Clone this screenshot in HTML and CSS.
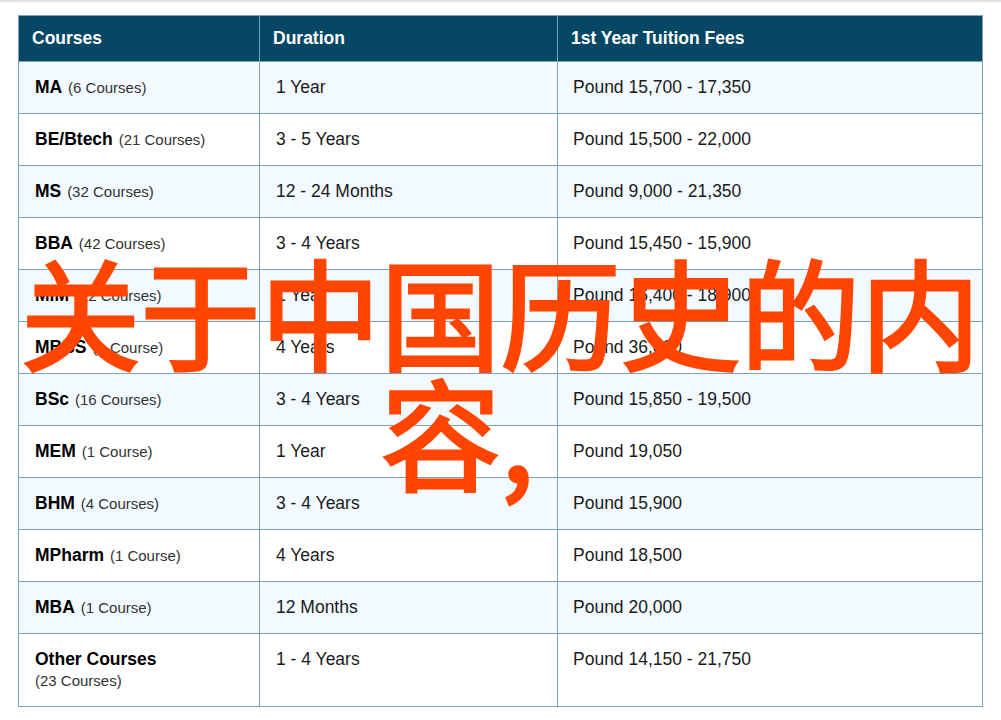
FILE: index.html
```html
<!DOCTYPE html>
<html lang="zh">
<head>
<meta charset="utf-8">
<title>Courses</title>
<link rel="stylesheet" href="styles.css">
</head>
<body>
<div class="topline"></div>
<main class="wrap">
<table class="fees">
<thead>
<tr><th>Courses</th><th>Duration</th><th>1st Year Tuition Fees</th></tr>
</thead>
<tbody>
<tr><td><b>MA</b> <small>(6 Courses)</small></td><td>1 Year</td><td>Pound 15,700 - 17,350</td></tr>
<tr><td><b>BE/Btech</b> <small>(21 Courses)</small></td><td>3 - 5 Years</td><td>Pound 15,500 - 22,000</td></tr>
<tr><td><b>MS</b> <small>(32 Courses)</small></td><td>12 - 24 Months</td><td>Pound 9,000 - 21,350</td></tr>
<tr><td><b>BBA</b> <small>(42 Courses)</small></td><td>3 - 4 Years</td><td>Pound 15,450 - 15,900</td></tr>
<tr><td><b>MIM</b> <small>(12 Courses)</small></td><td>1 Year</td><td>Pound 16,400 - 18,900</td></tr>
<tr><td><b>MBBS</b> <small>(1 Course)</small></td><td>4 Years</td><td>Pound 36,000</td></tr>
<tr><td><b>BSc</b> <small>(16 Courses)</small></td><td>3 - 4 Years</td><td>Pound 15,850 - 19,500</td></tr>
<tr><td><b>MEM</b> <small>(1 Course)</small></td><td>1 Year</td><td>Pound 19,050</td></tr>
<tr><td><b>BHM</b> <small>(4 Courses)</small></td><td>3 - 4 Years</td><td>Pound 15,900</td></tr>
<tr><td><b>MPharm</b> <small>(1 Course)</small></td><td>4 Years</td><td>Pound 18,500</td></tr>
<tr><td><b>MBA</b> <small>(1 Course)</small></td><td>12 Months</td><td>Pound 20,000</td></tr>
<tr class="last"><td><b>Other Courses</b><br><small>(23 Courses)</small></td><td>1 - 4 Years</td><td>Pound 14,150 - 21,750</td></tr>
</tbody>
</table>
</main>
<h1 class="headline"><span class="line">关于中国历史的内</span><span class="line line-two">容,</span></h1>
</body>
</html>
```
FILE: styles.css
```css
html, body { margin: 0; padding: 0; background: #fff; }
body { position: relative; height: 720px; overflow: hidden; font-family: "Liberation Sans", Arial, sans-serif; }
.topline { height: 3px; background: linear-gradient(#dcdcdc, #fafafa); }
.wrap { padding: 12px 18px 0; }
.fees { width: 965px; border-collapse: collapse; table-layout: fixed; font-size: 17.5px; color: #1a1a1a; }
.fees th, .fees td { border: 1px solid #7aa3ba; box-sizing: border-box; text-align: left; }
.fees th:nth-child(1) { width: 241px; }
.fees th:nth-child(2) { width: 298px; }
.fees th { height: 46px; background: #054764; color: #fff; font-weight: 700; padding: 0 13px; font-size: 17.5px; }
.fees td { height: 52px; padding: 0 16px; vertical-align: middle; }
.fees td:nth-child(3) { padding-left: 15px; }
.fees tbody tr:nth-child(odd) { background: #f2f9ff; }
.fees b { color: #000; font-size: 17.5px; margin-right: 1px; }
.fees small { font-size: 15px; color: #333; }
.fees .last td { height: 73px; vertical-align: top; padding-top: 15px; line-height: 21px; }
.headline { position: absolute; left: 20px; top: 250px; width: 961px; margin: 0; text-align: center; font-family: "Noto Sans CJK SC", sans-serif; font-size: 120px; line-height: 120px; font-weight: 400; color: #ff4500; -webkit-text-stroke: 3px #ff4500; }
.line { display: block; }
.line-two { padding-right: 86px; }
```
